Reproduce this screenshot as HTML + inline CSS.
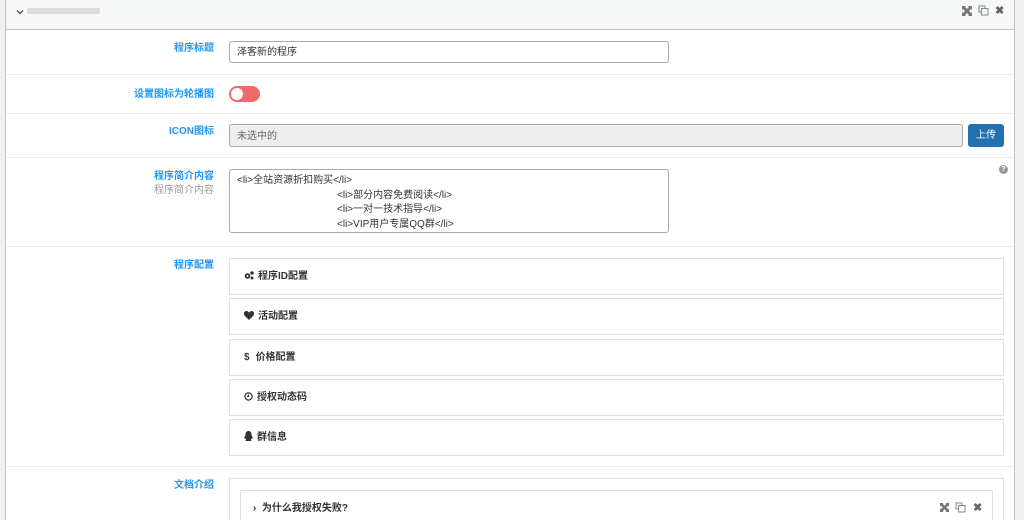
<!DOCTYPE html>
<html><head><meta charset="utf-8"><style>
*{box-sizing:border-box;margin:0;padding:0}
html,body{width:1024px;height:520px;overflow:hidden}
body{background:#f0f0f1;font-family:"Liberation Sans","Noto Sans CJK SC",sans-serif;font-size:10px;color:#333;position:relative}
.panel{position:absolute;left:5px;top:0;width:1010px;height:520px;background:#fff;border-left:1px solid #c3c4c7;border-right:1px solid #c3c4c7;overflow:hidden}
.hdr{position:absolute;left:0;top:0;right:0;height:30px;background:#f6f7f7;border-bottom:1px solid #c3c4c7}
.abs{position:absolute}
.lab{position:absolute;right:800px;color:#2196f3;font-weight:bold;text-align:right;white-space:nowrap;line-height:12px}
.sep{position:absolute;left:0;right:0;height:1px;background:#eee}
.inp{position:absolute;border:1px solid #a7aaad;border-radius:3px;background:#fff;padding-left:7px;font-size:10px;color:#333}
.box{position:absolute;left:223px;width:775px;height:37px;border:1px solid #e0e0e0;font-weight:bold;font-size:10px;color:#333;padding:0 0 0 14px;line-height:36px}
.box svg{vertical-align:-1px;margin-right:4px}
</style></head><body>
<div class="panel">
 <div class="hdr">
  <svg class="abs" style="left:10px;top:8px" width="8" height="8" viewBox="0 0 8 8"><path d="M1 2.5L4 5.5L7 2.5" stroke="#555" stroke-width="1.4" fill="none"/></svg>
  <div class="abs" style="left:21px;top:8px;width:73px;height:6px;background:#dcdcdc;border-radius:2px"></div>
  <svg class="abs" style="left:956px;top:6px" width="10" height="10" viewBox="0 0 10 10" fill="#777"><path d="M0 0h4L3 1l2 2 2-2-1-1h4v4L9 3 7 5l2 2 1-1v4H6l1-1-2-2-2 2 1 1H0V6l1 1 2-2-2-2-1 1z"/></svg>
  <svg class="abs" style="left:972px;top:5px" width="11" height="11" viewBox="0 0 11 11" fill="none" stroke="#888"><rect x="1" y="1" width="6" height="6"/><rect x="3.5" y="3.5" width="6.5" height="6.5" fill="#f6f7f7"/></svg>
  <div class="abs" style="left:989px;top:4px;font-size:11px;font-weight:bold;color:#666">✖</div>
 </div>
 <div class="lab" style="top:43px">程序标题</div>
 <div class="inp" style="left:223px;top:41px;width:440px;height:22px;line-height:22px">泽客新的程序</div>
 <div class="sep" style="top:74px"></div>
 <div class="lab" style="top:89px">设置图标为轮播图</div>
 <div class="abs" style="left:223px;top:86px;width:31px;height:16px;border-radius:8px;background:#ef6b6b"><div class="abs" style="left:2px;top:2px;width:12px;height:12px;border-radius:50%;background:#fff"></div></div>
 <div class="sep" style="top:113px"></div>
 <div class="lab" style="top:126px">ICON图标</div>
 <div class="inp" style="left:223px;top:124px;width:734px;height:23px;line-height:23px;background:#eee;color:#666">未选中的</div>
 <div class="abs" style="left:962px;top:124px;width:36px;height:23px;background:#2271b1;border-radius:3px;color:#fff;text-align:center;line-height:23px">上传</div>
 <div class="sep" style="top:157px"></div>
 <div class="lab" style="top:171px">程序简介内容</div>
 <div class="abs" style="right:800px;top:185px;color:#999;white-space:nowrap;line-height:12px">程序简介内容</div>
 <div class="inp" style="left:223px;top:169px;width:440px;height:64px;padding-top:4px;line-height:14.5px;white-space:pre">&lt;li&gt;全站资源折扣购买&lt;/li&gt;
                                    &lt;li&gt;部分内容免费阅读&lt;/li&gt;
                                    &lt;li&gt;一对一技术指导&lt;/li&gt;
                                    &lt;li&gt;VIP用户专属QQ群&lt;/li&gt;</div>
 <div class="abs" style="left:993px;top:165px;width:9px;height:9px;border-radius:50%;background:#999;color:#fff;font-size:7px;font-weight:bold;text-align:center;line-height:9px">?</div>
 <div class="sep" style="top:246px"></div>
 <div class="lab" style="top:260px">程序配置</div>
 <div class="box" style="top:258px"><svg width="10" height="9" viewBox="0 0 10 9" fill="#333"><circle cx="3.5" cy="5" r="2.8"/><circle cx="3.5" cy="5" r="1" fill="#fff"/><circle cx="8" cy="2" r="1.8"/><circle cx="8" cy="7" r="1.5"/></svg>程序ID配置</div>
 <div class="box" style="top:298px"><svg width="10" height="9" viewBox="0 0 10 9" fill="#333"><path d="M5 9L1 5C-1 3 0 0 2.5 0 3.8 0 4.5 1 5 1.6 5.5 1 6.2 0 7.5 0 10 0 11 3 9 5z"/></svg>活动配置</div>
 <div class="box" style="top:339px"><span style="margin-right:6px">$</span>价格配置</div>
 <div class="box" style="top:379px"><svg width="9" height="9" viewBox="0 0 9 9" fill="none" stroke="#333" stroke-width="1.2"><circle cx="4.5" cy="4.5" r="3.6"/><path d="M4.5 2.5v2h-1.5"/></svg>授权动态码</div>
 <div class="box" style="top:419px"><svg width="9" height="10" viewBox="0 0 9 10" fill="#333"><path d="M4.5 0C7 0 7.5 2 7.5 4L9 7 7 8 7.5 10H1.5L2 8 0 7 1.5 4C1.5 2 2 0 4.5 0z"/></svg>群信息</div>
 <div class="sep" style="top:466px"></div>
 <div class="lab" style="top:480px">文档介绍</div>
 <div class="abs" style="left:223px;top:478px;width:775px;height:60px;border:1px solid #e0e0e0"></div>
 <div class="abs" style="left:234px;top:490px;width:753px;height:50px;border:1px solid #e0e0e0;font-weight:bold;padding:0 0 0 12px;line-height:36px">›&nbsp; 为什么我授权失败?</div>
 <svg class="abs" style="left:934px;top:503px" width="9" height="9" viewBox="0 0 10 10" fill="#777"><path d="M0 0h4L3 1l2 2 2-2-1-1h4v4L9 3 7 5l2 2 1-1v4H6l1-1-2-2-2 2 1 1H0V6l1 1 2-2-2-2-1 1z"/></svg>
 <svg class="abs" style="left:949px;top:502px" width="11" height="11" viewBox="0 0 11 11" fill="none" stroke="#888"><rect x="1" y="1" width="6" height="6"/><rect x="3.5" y="3.5" width="6.5" height="6.5" fill="#fff"/></svg>
 <div class="abs" style="left:967px;top:501px;font-size:11px;font-weight:bold;color:#666">✖</div>
</div>
</body></html>
